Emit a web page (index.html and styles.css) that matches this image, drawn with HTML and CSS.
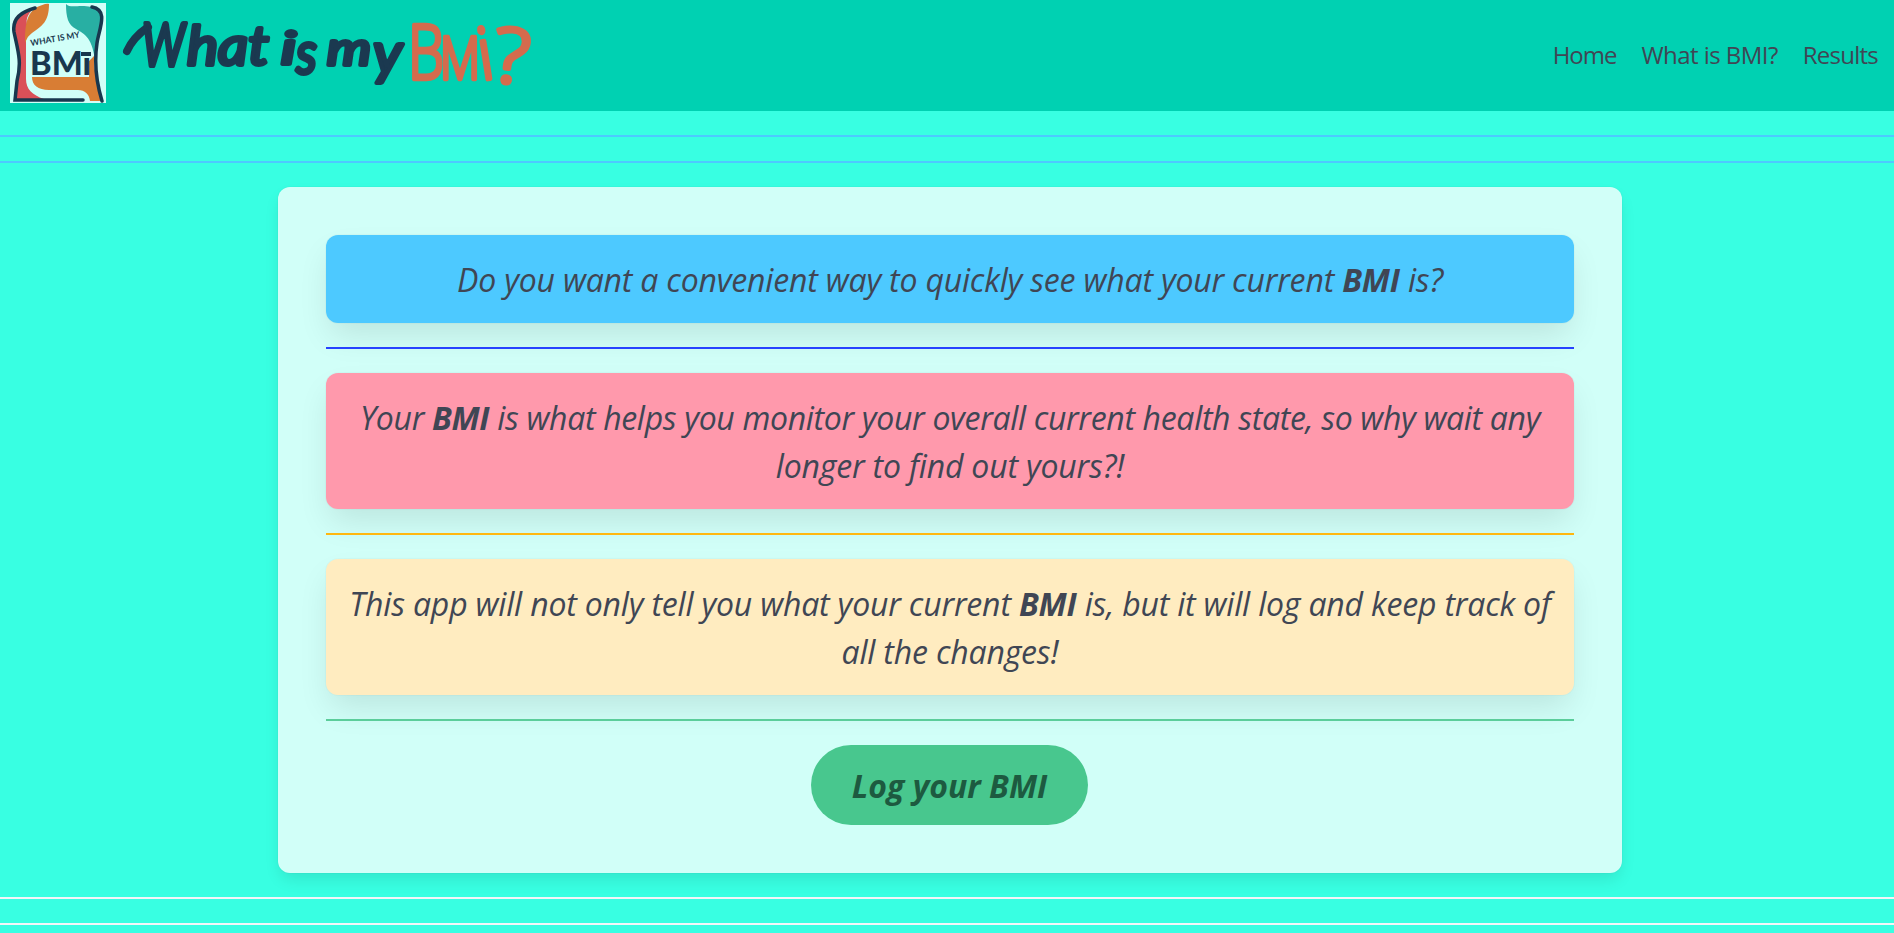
FILE: index.html
```html
<!DOCTYPE html>
<html lang="en">
<head>
<meta charset="utf-8">
<title>What is my BMI?</title>
<link rel="stylesheet" href="styles.css">
</head>
<body>
<nav class="navbar">
  <a class="brand" href="#">
    <svg class="logo" viewBox="0 0 96 100" role="img" aria-label="What is my BMI logo">
      <rect width="96" height="100" fill="#d1fff8"/>
      <path d="M24 5C10 8 2 15 4 28C8 47 12 58 8 76L5 98H73V96H34C22 92 16 86 16 76V38C16 32 19 28 18 24C14 15 20 9 24 5Z" fill="#da5058"/>
      <path d="M25 5C32 2 36 0 39 1C39 19 32 23 22 30C17 34 17 36 15 40C15 21 17 12 25 5Z" fill="#d87d34"/>
      <path d="M56 1C61 6 69 1 81 4C94 8 93 18 90 30L85 57C82 32 72 30 66 26C58 22 56 14 56 1Z" fill="#28afa3"/>
      <path d="M22 74H79V58L84 53C84 67 87 82 91 98H80C79 91 75 87 68 87H39C28 87 22 82 22 74Z" fill="#d87d34"/>
      <path d="M25 5C10 9 2 16 4 29C8 48 12 59 7 78L5 97H73" class="logo-line"/>
      <path d="M82 4C99 7 89 26 87 40C84 60 86 78 92 98" class="logo-line"/>
      <path d="M71 51H81" class="logo-macron"/>
      <text x="21" y="43" transform="rotate(-10 21 43)" textLength="50" lengthAdjust="spacingAndGlyphs" class="logo-small">WHAT IS MY</text>
      <text x="20" y="72" textLength="61" lengthAdjust="spacingAndGlyphs" class="logo-big">BMı</text>
    </svg>
    <svg class="wordmark" viewBox="0 0 430 100" role="img" aria-label="What is my BMi?">
      <g class="ink">
        <path d="M13 48C17 39 24 31 34 24" class="swash"/>
        <text x="28" y="63" font-size="60" textLength="43" lengthAdjust="spacingAndGlyphs">W</text>
        <text x="73" y="62" font-size="54" textLength="82" lengthAdjust="spacingAndGlyphs">hat</text>
        <text x="167" y="61" font-size="44" textLength="15" lengthAdjust="spacingAndGlyphs">i</text>
        <text x="182" y="71" font-size="60" textLength="21" lengthAdjust="spacingAndGlyphs">s</text>
        <text x="213" y="62" font-size="46" textLength="44" lengthAdjust="spacingAndGlyphs">m</text>
        <text x="259" y="70" font-size="56" textLength="29" lengthAdjust="spacingAndGlyphs">y</text>
      </g>
      <g class="coral">
        <text x="294" y="76" font-size="75" textLength="36" lengthAdjust="spacingAndGlyphs">B</text>
        <text x="326" y="76" font-size="59" textLength="40" lengthAdjust="spacingAndGlyphs">M</text>
        <text x="368" y="76" font-size="72" textLength="14" lengthAdjust="spacingAndGlyphs" transform="rotate(-9 375 76)">i</text>
        <text x="380" y="80" font-size="76" textLength="36" lengthAdjust="spacingAndGlyphs" transform="rotate(5 400 54)">?</text>
      </g>
    </svg>
  </a>
  <div class="menu">
    <a href="#" class="m1">Home</a>
    <a href="#" class="m2">What is BMI?</a>
    <a href="#" class="m3">Results</a>
  </div>
</nav>
<hr class="info">
<hr class="info">
<main class="card">
  <section class="box blue"><span class="l1">Do you want a convenient way to quickly see what your current <strong>BMI</strong> is?</span></section>
  <hr class="link">
  <section class="box pink"><span class="l2">Your <strong>BMI</strong> is what helps you monitor your overall current health state, so why wait any</span><span class="l3">longer to find out yours?!</span></section>
  <hr class="warning">
  <section class="box yellow"><span class="l4">This app will not only tell you what your current <strong>BMI</strong> is, but it will log and keep track of</span><span class="l5">all the changes!</span></section>
  <hr class="success">
  <button class="button"><span>Log your BMI</span></button>
</main>
<hr class="light">
<hr class="light">
</body>
</html>
```
FILE: styles.css
```css
* { box-sizing: border-box; }
html { overflow: hidden; background: #38ffe2; }
body {
  margin: 0;
  width: 1900px;
  font-family: "Open Sans", "Noto Sans", sans-serif;
  color: #404654;
}
hr { height: 2px; margin: 24px 0; border: 0; }
.navbar {
  height: 111px;
  background: #00d1b2;
  display: flex;
  justify-content: space-between;
  padding-right: 22px;
}
.brand { display: flex; padding: 3px 0 0 10px; }
.logo { width: 96px; height: 100px; }
.logo-line { fill: none; stroke: #18374e; stroke-width: 3.5; stroke-linecap: round; }
.logo-macron { stroke: #18374e; stroke-width: 4; }
.logo-small { font: 700 8.5px "Lato", sans-serif; fill: #18374e; }
.logo-big { font: 900 32px "Lato", sans-serif; fill: #18374e; }
.wordmark { width: 430px; height: 100px; margin-left: 8px; }
.ink, .coral { stroke-linejoin: round; stroke-linecap: round; }
.ink { font-family: "Lato", sans-serif; font-style: italic; font-weight: 400; fill: #1b3950; stroke: #1b3950; stroke-width: 4; }
.swash { fill: none; stroke-width: 8; }
.coral { font-family: "Open Sans", sans-serif; font-weight: 300; fill: #d46b4d; stroke: #d46b4d; stroke-width: 4.5; }
.menu { display: flex; align-items: center; gap: 25px; padding-bottom: 2px; font-size: 24px; }
.menu a { color: inherit; text-decoration: none; white-space: nowrap; }
.m1 { letter-spacing: -1px; }
.m2 { letter-spacing: -.55px; }
.m3 { letter-spacing: -.75px; }
.card {
  width: 1344px;
  height: 686px;
  margin: 0 auto;
  padding: 48px;
  border-radius: 12px;
  background: #d1fff8;
  box-shadow: 0 8px 16px -2px rgba(10, 10, 10, .1), 0 0 0 1px rgba(10, 10, 10, .02);
}
.box {
  display: flex;
  flex-direction: column;
  align-items: center;
  padding: 21px 0 19px;
  border-radius: 12px;
  font-size: 32px;
  line-height: 48px;
  font-style: italic;
  white-space: nowrap;
  box-shadow: 0 16px 32px -4px rgba(10, 10, 10, .1), 0 0 0 1px rgba(10, 10, 10, .02);
}
.l1, .l3, .l5 { letter-spacing: -.18px; }
.l2 { letter-spacing: -.32px; }
.l4 { letter-spacing: -.18px; }
.blue { background: #4dc9ff; }
.pink { background: #ff99ac; }
.yellow { background: #ffecc0; }
.info { background: #4dc9ff; }
.link { background: #2642ff; }
.warning { background: #ffb70f; }
.success { background: #5bcd9a; }
.light { background: #f3f5f8; }
.button {
  display: block;
  width: 277px;
  height: 80px;
  margin: 0 auto 0 485px;
  padding: 2px 0 0;
  border: 0;
  border-radius: 40px;
  background: #48c78e;
  color: #1d5a40;
  font: italic 700 32px/48px "Open Sans", sans-serif;
}
```
